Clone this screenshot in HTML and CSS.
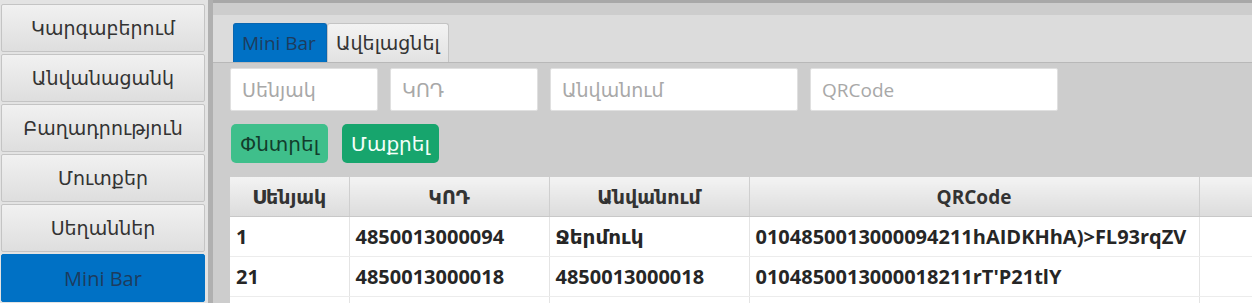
FILE: index.html
```html
<!DOCTYPE html>
<html>
<head>
<title>Mini Bar</title>
<link rel="stylesheet" href="styles.css">
</head>
<body>

<div class="app">
    <div class="sidebar">
        <button class="nav-btn">Կարգաբերում</button>
        <button class="nav-btn">Անվանացանկ</button>
        <button class="nav-btn">Բաղադրություն</button>
        <button class="nav-btn">Մուտքեր</button>
        <button class="nav-btn">Սեղաններ</button>
        <button class="nav-btn active">Mini Bar</button>
    </div>

    <div class="main">
        <div class="tabs">
            <div class="tab active">Mini Bar</div>
            <div class="tab">Ավելացնել</div>
        </div>

        <div class="filters">
            <input class="field small" type="text" placeholder="Սենյակ">
            <input class="field small" type="text" placeholder="ԿՈԴ">
            <input class="field" type="text" placeholder="Անվանում">
            <input class="field" type="text" placeholder="QRCode">
        </div>

        <div class="actions">
            <button class="btn search">Փնտրել</button>
            <button class="btn clear">Մաքրել</button>
        </div>

        <table class="grid">
            <colgroup>
                <col class="c1"><col class="c2"><col class="c3"><col class="c4"><col>
            </colgroup>
            <tr>
                <th>Սենյակ</th>
                <th>ԿՈԴ</th>
                <th>Անվանում</th>
                <th>QRCode</th>
                <th></th>
            </tr>
            <tr>
                <td>1</td>
                <td>4850013000094</td>
                <td>Ջերմուկ</td>
                <td>0104850013000094211hAIDKHhA)&gt;FL93rqZV</td>
                <td></td>
            </tr>
            <tr>
                <td>21</td>
                <td>4850013000018</td>
                <td>4850013000018</td>
                <td>0104850013000018211rT'P21tlY</td>
                <td></td>
            </tr>
            <tr>
                <td></td><td></td><td></td><td></td><td></td>
            </tr>
        </table>
    </div>
</div>

</body>
</html>
```

FILE: styles.css
```css
body {
    margin: 0;
    font-family: 'Open Sans', 'DejaVu Sans', sans-serif;
    overflow: hidden;
}

.app {
    display: flex;
    height: 303px;
    overflow: hidden;
}

.sidebar {
    width: 204px;
    flex: none;
    background-color: #e3e3e3;
    padding: 4px 3px 0 1px;
    border-right: 5px solid #b0b0b0;
    display: flex;
    flex-direction: column;
    gap: 2px;
}

.nav-btn {
    height: 48px;
    flex: none;
    border: 1px solid #c4c4c4;
    border-radius: 2px;
    background: linear-gradient(#f1f1f1, #dedede);
    font-family: 'Open Sans', 'DejaVu Sans', sans-serif;
    font-size: 19px;
    color: #333;
    padding: 0;
}

.nav-btn.active {
    background: #0071c5;
    border-color: #0071c5;
    color: #1d3c5e;
    font-size: 20px;
}

.main {
    flex: 1;
    background-color: #cdcdcd;
    border-top: 3px solid #a8a8a8;
    min-width: 0;
}

.tabs {
    margin-top: 12px;
    height: 47px;
    background-color: #dcdcdc;
    border-bottom: 1px solid #b8b8b8;
    display: flex;
    align-items: flex-end;
    padding-left: 20px;
}

.tab {
    height: 38px;
    line-height: 38px;
    padding: 0 8px;
    border: 1px solid #c4c4c4;
    border-bottom: none;
    border-radius: 3px 3px 0 0;
    background: linear-gradient(#f3f3f3, #e2e2e2);
    font-size: 19px;
    color: #333;
}

.tab.active {
    background: #0071c5;
    border-color: #0a66b0;
    color: #1d3c5e;
    width: 76px;
}

.filters {
    display: flex;
    gap: 12px;
    padding: 5px 0 0 17px;
}

.field {
    width: 248px;
    height: 43px;
    box-sizing: border-box;
    border: 1px solid #e0e0e0;
    border-radius: 2px;
    padding: 0 11px;
    font-family: 'Open Sans', 'DejaVu Sans', sans-serif;
    font-size: 19px;
    background-color: white;
}

.field.small {
    width: 148px;
}

.field::placeholder {
    color: #a8a8a8;
}

.actions {
    display: flex;
    gap: 14px;
    padding: 13px 0 0 18px;
}

.btn {
    width: 97px;
    height: 39px;
    border: none;
    border-radius: 5px;
    font-family: 'Open Sans', 'DejaVu Sans', sans-serif;
    font-size: 20px;
    padding: 0;
}

.btn.search {
    background-color: #3fbf8b;
    color: #123d2c;
}

.btn.clear {
    background-color: #17a56d;
    color: #f4fff9;
}

.grid {
    margin: 14px 0 0 17px;
    border-collapse: collapse;
    table-layout: fixed;
    font-size: 20px;
    font-weight: bold;
    color: #262626;
    width: 1040px;
    background-color: white;
}

.grid th {
    height: 39px;
    padding: 0;
    background: linear-gradient(#f3f3f3, #dcdcdc);
    border-right: 1px solid #cfcfcf;
    border-bottom: 1px solid #c8c8c8;
    color: #333;
    font-size: 19px;
    font-weight: bold;
}

.grid td {
    height: 39px;
    padding: 0 6px;
    border-right: 1px solid #e4e4e4;
    border-bottom: 1px solid #ececec;
    white-space: nowrap;
    overflow: hidden;
}

.c1 { width: 119px; }
.c2 { width: 200px; }
.c3 { width: 200px; }
.c4 { width: 450px; }
```
